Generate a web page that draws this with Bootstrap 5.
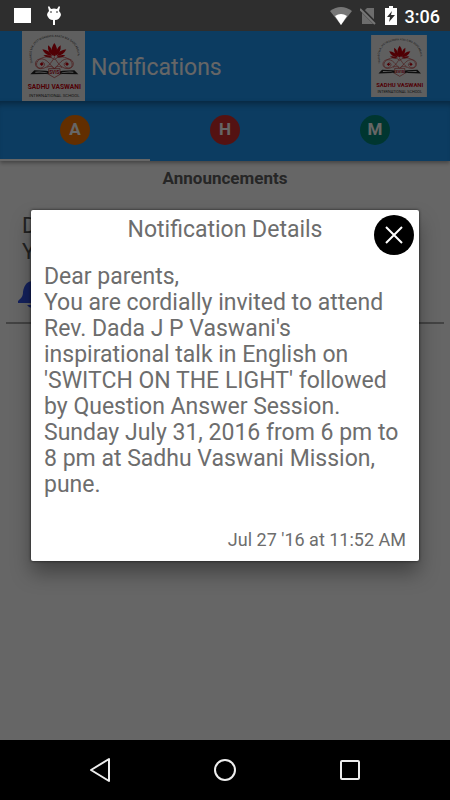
<!DOCTYPE html>
<html lang="en">
<head>
<meta charset="utf-8">
<meta name="viewport" content="width=device-width, initial-scale=1">
<title>Notifications</title>
<link href="https://cdn.jsdelivr.net/npm/bootstrap@5.3.0/dist/css/bootstrap.min.css" rel="stylesheet">
<style>
  body { font-family: Roboto, "Liberation Sans", sans-serif; background: #000; }
  .status-bar { height: 31px; background: #2e2e2e; color: #fff; font-size: 18px; font-weight: 500; padding: 0 10px 0 14px; }
  .clock { padding: 2px 0 0 4px; }
  .app-bar { height: 70px; background: #1e96f2; padding: 0 23px 0 22px; color: #fff; }
  .app-title { font-size: 23px; line-height: 28px; font-weight: 400; padding: 4px 0 0 6px; }
  .tab-strip { height: 60px; background: #1e96f2; box-shadow: inset 0 7px 6px -4px rgba(0,0,0,.35), 0 2px 4px rgba(0,0,0,.35); }
  .tab-strip .nav-link { border-bottom: 2px solid transparent; }
  .tab-strip .nav-link.active { border-color: #fff; }
  .tab-dot { width: 30px; height: 30px; color: #fff; font-size: 17px; font-weight: 700; }
  .dot-a { background: #f57400; }
  .dot-h { background: #d32f2f; }
  .dot-m { background: #008878; }
  .section-title { font-size: 17px; line-height: 20px; font-weight: 700; color: #606060; padding-top: 7px; }
  .notice { margin: 25px 6px 0; padding: 0 12px 13px 12px; border-bottom: 2px solid #a8a8a8; }
  .notice-text { font-size: 22px; line-height: 26px; color: #555; padding-left: 4px; }
  .scrim { background: rgba(0,0,0,.6); padding: 0 31px; }
  .details { border-radius: 2px; min-height: 351px; padding: 5px 5px 8px 13px; color: #6d6d6d; box-shadow: 0 12px 20px rgba(0,0,0,.35), 0 0 3px rgba(0,0,0,.7); }
  .details-title { font-size: 23px; line-height: 30px; font-weight: 400; padding-left: 32px; }
  .close-round { width: 40px; height: 40px; background: #000; }
  .details-body { font-size: 23px; line-height: 26px; padding-top: 9px; }
  .details-time { font-size: 18px; line-height: 26px; padding-right: 8px; }
  .system-nav { height: 60px; background: #000; padding: 0 37px; }
</style>
<script src="https://cdn.jsdelivr.net/npm/bootstrap@5.3.0/dist/js/bootstrap.bundle.min.js"></script>
</head>
<body>
<svg class="d-none" aria-hidden="true">
  <symbol id="crest" viewBox="0 0 189 210">
    <rect width="189" height="210" fill="#eee"/>
    <path id="crest-arc" d="M33 96C17 50 45 18 97 18s81 32 65 78" fill="none"/>
    <text font-size="9" fill="#444"><textPath href="#crest-arc">TAMASO MA JYOTIRGAMAYA ASATO MA SADGAMAYA</textPath></text>
    <g fill="#c8000c">
      <path d="M97 36q11 14 7 31l-7 10-7-10q-4-17 7-31z"/>
      <path d="M78 43q14 9 16 32-18-9-16-32zM116 43q-14 9-16 32 18-9 16-32z"/>
      <path d="M61 55q22 2 29 20-20 0-29-20zM133 55q-22 2-29 20 20 0 29-20z"/>
      <path d="M64 73q14-3 27 5-15 5-27-5zM130 73q-14-3-27 5 15 5 27-5z"/>
      <path d="M59 94l6 5-6 6-6-6zM135 94l6 5-6 6-6-6z"/>
    </g>
    <g fill="none" stroke="#b33" stroke-width="2">
      <path d="M97 79C87 97 74 114 55 113 36 112 35 87 53 84c22-3 28 16 44 28 16-12 22-31 44-28 18 3 17 28-2 29-19 1-32-16-42-34z"/>
      <path d="M97 87C86 72 60 76 47 90c-9 13 1 25 13 20 9-4 11-15 0-17M97 87c11-15 37-11 50 3 9 13-1 25-13 20-9-4-11-15 0-17"/>
      <path d="M74 110c10-8 17-3 23 4 6-7 13-12 23-4"/>
    </g>
    <path d="M25 130l12-12 35 1q17 1 25 14 8-13 25-14l35-1 12 12-47-1q-18 0-25 7-7-7-25-7zM40 125q22-2 38 2-10-7-38-5zM154 125q-22-2-38 2 10-7 38-5z" fill="#222" fill-rule="evenodd"/>
    <path d="M80 113h34v17l-17 10-17-10z" fill="#eee" stroke="#a22" stroke-width="2"/>
    <text x="97" y="129" text-anchor="middle" font-size="14" font-weight="700" fill="#b00010">SVIS</text>
    <text x="97" y="175" text-anchor="middle" font-size="20" font-weight="700" fill="#c8000c">SADHU VASWANI</text>
    <text x="97" y="198" text-anchor="middle" font-size="13" fill="#333">INTERNATIONAL SCHOOL</text>
  </symbol>
</svg>

<div class="d-flex flex-column vh-100 overflow-hidden">
  <header class="status-bar d-flex align-items-center justify-content-between flex-shrink-0">
    <div class="d-flex align-items-center gap-3">
      <svg width="17" height="17" aria-hidden="true"><rect y="1" width="17" height="15" fill="#fff"/></svg>
      <svg width="14" height="20" viewBox="0 0 14 20" aria-hidden="true">
        <path d="M2 0l2 3q3-1 6 0l2-3 1 1-1 4q2 2 2 4c-1 3-3 5-6 5v5H6v-5C3 14 1 12 0 9q0-2 2-4L1 1z" fill="#fff"/>
        <path d="M3 6h2M9 6h2" stroke="#2e2e2e" stroke-width="1"/>
      </svg>
    </div>
    <div class="d-flex align-items-center">
      <svg width="22" height="18" viewBox="0 0 22 18" aria-label="Wi-Fi"><path d="M0 4q11-8 22 0L11 18z" fill="#777"/><path d="M5 9q6-4 12 0l-6 9z" fill="#fff"/></svg>
      <svg class="ms-2" width="17" height="18" viewBox="0 0 17 18" aria-label="No SIM"><path d="M7 1h7v16H2V6z" fill="#6d6d6d"/><path d="M0 1l16 16" stroke="#2e2e2e" stroke-width="4"/><path d="M0 2l15 15" stroke="#777" stroke-width="2"/></svg>
      <svg class="ms-2 me-1" width="12" height="19" viewBox="0 0 12 19" aria-label="Charging"><path d="M4 0h4v2h4v17H0V2h4z" fill="#fff"/><path d="M7 5l-5 6h3l-1 5 6-7H6z" fill="#2e2e2e"/></svg>
      <span class="clock">3:06</span>
    </div>
  </header>

  <div class="position-relative flex-fill bg-white">
    <div class="app-bar d-flex align-items-center">
      <svg width="63" height="70" role="img" aria-label="School logo"><use href="#crest"/></svg>
      <h1 class="app-title mb-0 me-auto">Notifications</h1>
      <svg width="56" height="62" role="img" aria-label="School logo"><use href="#crest"/></svg>
    </div>
    <nav class="tab-strip nav nav-justified">
      <a class="nav-link active p-0 d-flex align-items-center justify-content-center" href="#announcements"><span class="tab-dot dot-a rounded-circle d-flex align-items-center justify-content-center">A</span></a>
      <a class="nav-link p-0 d-flex align-items-center justify-content-center" href="#homework"><span class="tab-dot dot-h rounded-circle d-flex align-items-center justify-content-center">H</span></a>
      <a class="nav-link p-0 d-flex align-items-center justify-content-center" href="#messages"><span class="tab-dot dot-m rounded-circle d-flex align-items-center justify-content-center">M</span></a>
    </nav>
    <main id="announcements">
      <h2 class="section-title text-center mb-0">Announcements</h2>
      <article class="notice">
        <p class="notice-text mb-3">D<br>Y</p>
        <svg class="d-block" width="28" height="28" viewBox="0 0 28 28" aria-hidden="true"><path d="M14 0c-6 1-8 5-9 11 0 5-2 6-5 9v2h28v-2c-3-3-5-4-5-9-1-6-3-10-9-11zM9 24h10q-2 3-5 3t-5-3z" fill="#3454e8"/></svg>
      </article>
    </main>

    <div class="scrim position-absolute top-0 start-0 w-100 h-100 d-flex align-items-center">
      <section class="details bg-white w-100 d-flex flex-column" role="dialog" aria-modal="true" aria-labelledby="details-title">
        <div class="d-flex align-items-start">
          <h2 id="details-title" class="details-title flex-fill text-center mb-0">Notification Details</h2>
          <button type="button" class="close-round btn p-0 border-0 rounded-circle d-flex align-items-center justify-content-center flex-shrink-0" aria-label="Close">
            <svg width="20" height="20" viewBox="0 0 20 20" aria-hidden="true"><path d="M2 2l16 16M18 2L2 18" stroke="#fff" stroke-width="2"/></svg>
          </button>
        </div>
        <p class="details-body mb-0">Dear parents,<br>You are cordially invited to attend Rev. Dada J P Vaswani's inspirational talk in English on 'SWITCH ON THE LIGHT' followed by Question Answer Session. Sunday July 31, 2016 from 6 pm to 8 pm at Sadhu Vaswani Mission, pune.</p>
        <time class="details-time mt-auto text-end" datetime="2016-07-27T11:52">Jul 27 '16 at 11:52 AM</time>
      </section>
    </div>
  </div>

  <footer class="system-nav d-flex align-items-center flex-shrink-0">
    <button type="button" class="btn p-0 border-0 flex-fill d-flex justify-content-center" aria-label="Back"><svg width="24" height="26" viewBox="0 0 24 26" fill="none" stroke="#eee" stroke-width="2"><path d="M21 2v22L3 13z" stroke-linejoin="round"/></svg></button>
    <button type="button" class="btn p-0 border-0 flex-fill d-flex justify-content-center" aria-label="Home"><svg width="24" height="24" viewBox="0 0 24 24" fill="none" stroke="#eee" stroke-width="2"><circle cx="12" cy="12" r="10"/></svg></button>
    <button type="button" class="btn p-0 border-0 flex-fill d-flex justify-content-center" aria-label="Recent apps"><svg width="24" height="24" viewBox="0 0 24 24" fill="none" stroke="#eee" stroke-width="2"><rect x="3" y="3" width="18" height="18" rx="1"/></svg></button>
  </footer>
</div>
</body>
</html>
